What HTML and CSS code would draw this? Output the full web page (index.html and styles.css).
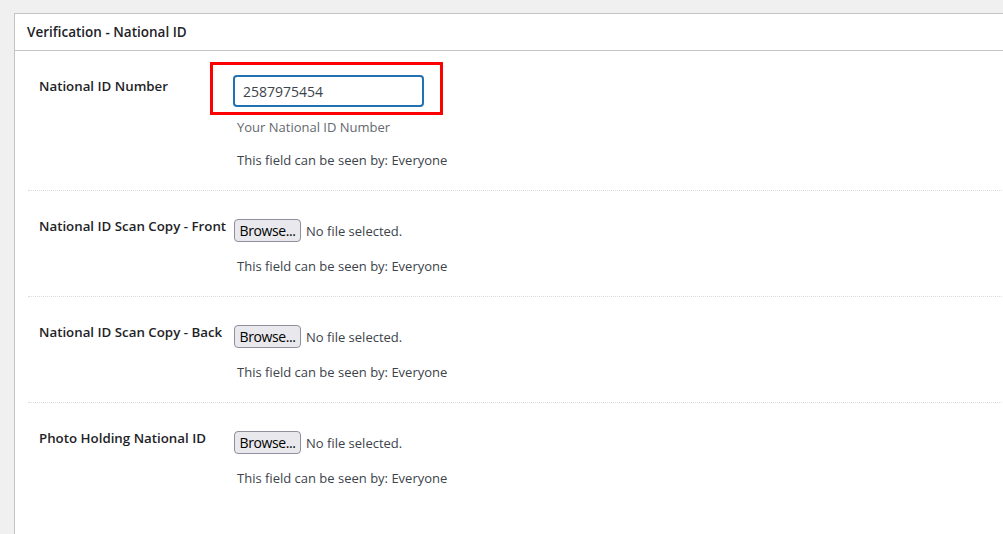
FILE: index.html
```html
<!DOCTYPE html>
<html lang="en">
<head>
    <meta charset="UTF-8">
    <meta name="viewport" content="width=device-width, initial-scale=1.0">
    <title>Verification - National ID</title>
    <link rel="stylesheet" href="styles.css">
</head>
<body>
    <div class="panel">
        <div class="panel-header">Verification - National ID</div>

        <div class="panel-body">
            <div class="field-row first">
                <div class="field-label">National ID Number</div>
                <div class="field-value">
                    <div class="highlight">
                        <input type="text" class="text-input" value="2587975454">
                    </div>
                    <div class="description">Your National ID Number</div>
                    <div class="visibility">This field can be seen by: Everyone</div>
                </div>
            </div>

            <div class="field-row">
                <div class="field-label">National ID Scan Copy - Front</div>
                <div class="field-value">
                    <div class="file-picker">
                        <button class="browse-button">Browse...</button>
                        <span class="file-name">No file selected.</span>
                    </div>
                    <div class="visibility">This field can be seen by: Everyone</div>
                </div>
            </div>

            <div class="field-row">
                <div class="field-label">National ID Scan Copy - Back</div>
                <div class="field-value">
                    <div class="file-picker">
                        <button class="browse-button">Browse...</button>
                        <span class="file-name">No file selected.</span>
                    </div>
                    <div class="visibility">This field can be seen by: Everyone</div>
                </div>
            </div>

            <div class="field-row last">
                <div class="field-label">Photo Holding National ID</div>
                <div class="field-value">
                    <div class="file-picker">
                        <button class="browse-button">Browse...</button>
                        <span class="file-name">No file selected.</span>
                    </div>
                    <div class="visibility">This field can be seen by: Everyone</div>
                </div>
            </div>
        </div>
    </div>
</body>
</html>
```

FILE: styles.css
```css
:root {
    --page-bg: #f0f0f1;
    --panel-bg: #ffffff;
    --panel-border: #c3c4c7;
    --text-color: #1d2327;
    --muted-color: #646970;
    --body-text: #3c434a;
    --focus-blue: #2271b1;
    --highlight-red: #ff0000;
    --separator: #dcdcde;
}

* {
    margin: 0;
    padding: 0;
    box-sizing: border-box;
}

body {
    background-color: var(--page-bg);
    font-family: 'Open Sans', 'Noto Sans', sans-serif;
    color: var(--text-color);
    font-size: 13px;
    overflow: hidden;
    height: 100vh;
}

.panel {
    margin: 13px -20px 0 14px;
    background-color: var(--panel-bg);
    border: 1px solid var(--panel-border);
    min-height: 600px;
}

.panel-header {
    height: 37px;
    padding: 0 12px;
    display: flex;
    align-items: center;
    font-size: 13.5px;
    font-weight: 600;
    border-bottom: 1px solid var(--panel-border);
}

.panel-body {
    padding-left: 13px;
}

.field-row {
    display: grid;
    grid-template-columns: 194px 1fr;
    padding: 25px 0 20px 11px;
    border-bottom: 1px dotted var(--separator);
}

.field-row.first {
    padding-top: 24px;
}

.field-row.last {
    border-bottom: none;
}

.field-label {
    font-size: 13.3px;
    font-weight: 600;
    line-height: 20px;
}

.first .field-label {
    margin-top: 1px;
}

.field-value {
    padding-top: 3px;
}

.first .field-value {
    padding-top: 0;
}

.highlight {
    position: relative;
    width: 191px;
}

.highlight::before {
    content: "";
    position: absolute;
    box-sizing: border-box;
    left: -23px;
    top: -13px;
    width: 233px;
    height: 53px;
    border: 3px solid var(--highlight-red);
    pointer-events: none;
}

.text-input {
    display: block;
    width: 191px;
    height: 32px;
    padding: 0 8px;
    border: 2px solid var(--focus-blue);
    border-radius: 4px;
    outline: none;
    font-family: inherit;
    font-size: 14px;
    color: var(--body-text);
}

.description {
    margin-top: 10px;
    margin-left: 4px;
    line-height: 20px;
    color: var(--muted-color);
}

.visibility {
    margin-top: 14px;
    margin-left: 4px;
    line-height: 20px;
    color: var(--body-text);
}

.first .visibility {
    margin-top: 13px;
}

.file-picker {
    display: flex;
    align-items: center;
    gap: 5px;
    height: 23px;
    padding-left: 1px;
}

.browse-button {
    height: 23px;
    width: 67px;
    border: 1px solid #8f8f9d;
    border-radius: 4px;
    background-color: #e9e9ed;
    font-family: inherit;
    font-size: 14px;
    color: #000;
    letter-spacing: -0.4px;
}

.file-name {
    font-size: 13px;
    color: var(--body-text);
}
```
